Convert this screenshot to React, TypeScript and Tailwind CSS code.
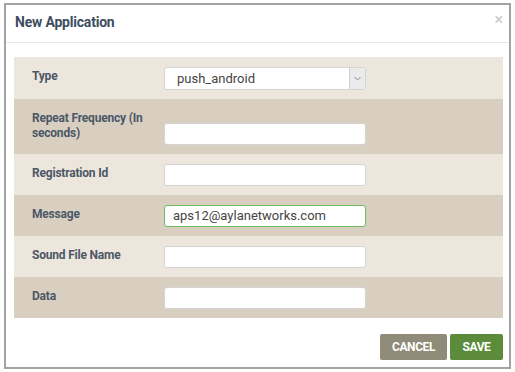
import React from 'react';

const rows = [
  { label: 'Type', kind: 'select', value: 'push_android' },
  { label: 'Repeat Frequency (In seconds)', kind: 'input', value: '' },
  { label: 'Registration Id', kind: 'input', value: '' },
  { label: 'Message', kind: 'input', value: 'aps12@aylanetworks.com', focused: true },
  { label: 'Sound File Name', kind: 'input', value: '' },
  { label: 'Data', kind: 'input', value: '' },
];

const App = () => {
  return (
    <div className="w-[515px] h-[372px] bg-white pt-[3px] pl-[4px]" style={{ fontFamily: 'Roboto, "Liberation Sans", sans-serif' }}>
      <div className="w-[507px] h-[366px] border-2 border-[#a3a3a3] bg-white flex flex-col">
        {/* header */}
        <div className="h-[38px] flex items-center justify-between pl-[9px] pr-[6px] border-b border-[#e8e8e8]">
          <h4 className="text-[14px] font-bold text-[#3d4d5e] tracking-[-0.2px] mt-[-3px]">New Application</h4>
          <span className="text-[16px] leading-none text-[#c8c8c8] mt-[-8px]">×</span>
        </div>

        {/* form */}
        <div className="mt-[14px] ml-[8px] mr-[6px]">
          {rows.map((r, i) => (
            <div
              key={r.label}
              className={`flex items-end pt-[10px] pb-[9px] ${i % 2 === 0 ? 'bg-[#ede6dc]' : 'bg-[#d9cfc1]'}`}
            >
              <label className="self-start w-[150px] pl-[18px] pr-[12px] text-[12px] leading-[15px] font-bold text-[#4b5867] mt-[2px] mb-[4px] tracking-[-0.2px]">
                {r.label}
              </label>
              {r.kind === 'select' ? (
                <div className="w-[202px] h-[23px] bg-white border border-[#d4d4d4] rounded-[3px] flex items-center">
                  <span className="flex-1 pl-[12px] text-[13px] text-[#444]">{r.value}</span>
                  <span className="w-[16px] h-full bg-[#ebebeb] border-l border-[#d0d0d0] rounded-r-[3px] flex items-center justify-center">
                    <svg width="7" height="5" viewBox="0 0 7 5">
                      <path d="M0.5 1 L3.5 4 L6.5 1" fill="none" stroke="#8a8a8a" strokeWidth="1" />
                    </svg>
                  </span>
                </div>
              ) : (
                <div
                  className={`w-[202px] h-[22px] bg-white rounded-[3px] border flex items-center pl-[8px] text-[13px] text-[#444] ${
                    r.focused ? 'border-[#6cbf5e]' : 'border-[#d4d4d4]'
                  }`}
                >
                  {r.value}
                </div>
              )}
            </div>
          ))}
        </div>

        {/* footer */}
        <div className="flex justify-end gap-[3px] mt-[16px] mr-[6px]">
          <button className="w-[67px] h-[26px] rounded-[2px] bg-[#8f8b78] text-white text-[12px] font-bold tracking-[-0.4px]">
            CANCEL
          </button>
          <button className="w-[53px] h-[26px] rounded-[2px] bg-[#5b8b3b] text-white text-[12px] font-bold tracking-[-0.4px]">
            SAVE
          </button>
        </div>
      </div>
    </div>
  );
};

export default App;
